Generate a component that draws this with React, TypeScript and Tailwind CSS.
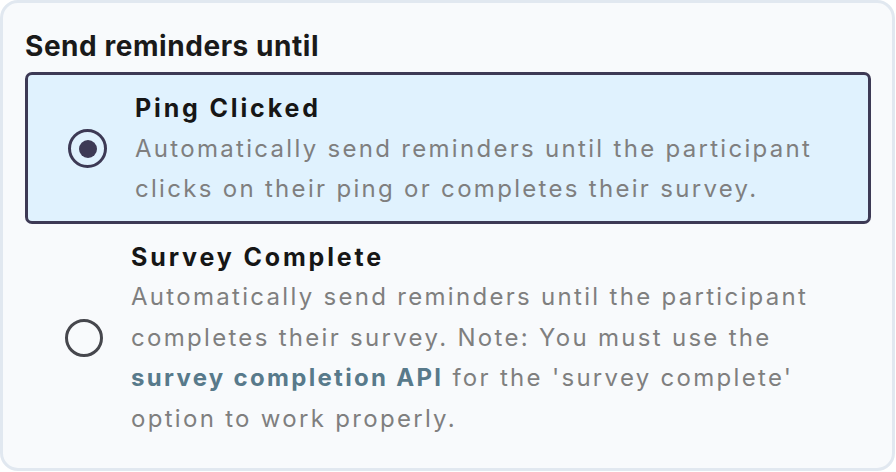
import { ReactNode } from "react"

type Option = {
  id: string
  title: string
  description: ReactNode
}

const options: Option[] = [
  {
    id: "ping_clicked",
    title: "Ping Clicked",
    description:
      "Automatically send reminders until the participant clicks on their ping or completes their survey.",
  },
  {
    id: "survey_complete",
    title: "Survey Complete",
    description: (
      <>
        Automatically send reminders until the participant completes their
        survey. Note: You must use the{" "}
        <a href="#" className="font-bold text-[#587a8b]">
          survey completion API
        </a>{" "}
        for the 'survey complete' option to work properly.
      </>
    ),
  },
]

function Radio({ checked }: { checked: boolean }) {
  if (checked) {
    return (
      <div className="flex h-[39px] w-[39px] shrink-0 items-center justify-center rounded-full border-[3.5px] border-[#3d3a55]">
        <div className="h-[18px] w-[18px] rounded-full bg-[#3d3a55]" />
      </div>
    )
  }
  return (
    <div className="h-[38px] w-[38px] shrink-0 rounded-full border-[3.5px] border-[#46474d]" />
  )
}

export default function App() {
  const selected = "ping_clicked"

  return (
    <div className="h-[472px] w-[896px] bg-white font-['Inter','Liberation_Sans',Arial,sans-serif]">
      <div className="h-[471px] w-[895px] rounded-[18px] border-[3px] border-[#e1e8f0] bg-[#f8fafc] pl-[22px] pr-[21px] pt-[26px]">
        <h2 className="mb-[9px] text-[28px] font-bold leading-[34px] tracking-[0.55px] text-[#1a1a1a]">
          Send reminders until
        </h2>

        <div>
          {options.map((o) => {
            const isOn = o.id === selected
            return (
              <label
                key={o.id}
                className={
                  isOn
                    ? "flex cursor-pointer items-center gap-[28px] rounded-[7px] border-[3px] border-[#3d3a55] bg-[#e0f2fe] pb-[11px] pl-[40px] pr-[4px] pt-[13px]"
                    : "flex cursor-pointer items-center gap-[28px] pb-[11px] pl-[40px] pr-[4px] pt-[13px]"
                }
              >
                <Radio checked={isOn} />
                <div className="min-w-0">
                  <p className="text-[25px] font-bold leading-[40.5px] tracking-[2.85px] text-[#161616]">
                    {o.title}
                  </p>
                  <p className="text-[24px] leading-[40.5px] tracking-[2.3px] text-[#7f7f7f]">
                    {o.description}
                  </p>
                </div>
              </label>
            )
          })}
        </div>
      </div>
    </div>
  )
}
